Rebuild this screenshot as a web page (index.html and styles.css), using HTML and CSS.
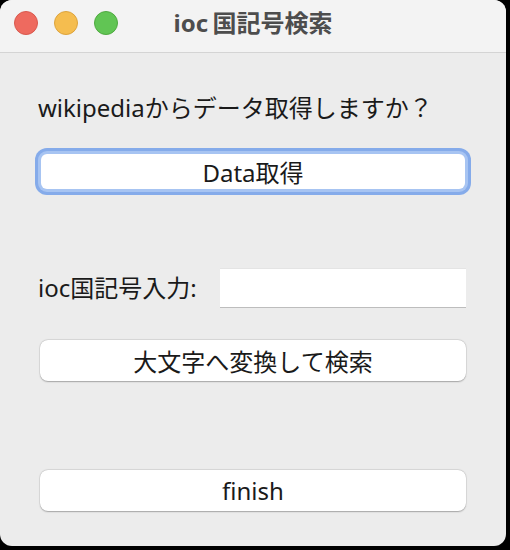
FILE: index.html
```html
<!DOCTYPE html>
<html lang="ja">
<head>
<meta charset="utf-8">
<title>ioc国記号検索</title>
<link rel="stylesheet" href="styles.css">
</head>
<body>
<div class="window">
  <div class="titlebar">
    <div class="lights">
      <span class="light red"></span>
      <span class="light yellow"></span>
      <span class="light green"></span>
    </div>
    <div class="title">ioc 国記号検索</div>
    <div class="spacer"></div>
  </div>
  <div class="content">
    <p class="prompt">wikipediaからデータ取得しますか？</p>
    <button class="btn btn-focus">Data取得</button>
    <div class="entry-row">
      <label class="entry-label" for="code">ioc国記号入力:</label>
      <input class="entry" id="code" type="text">
    </div>
    <button class="btn btn-search">大文字へ変換して検索</button>
    <button class="btn btn-finish">finish</button>
  </div>
</div>
</body>
</html>
```

FILE: styles.css
```css
html, body {
  margin: 0;
  padding: 0;
  background: #000;
}

body {
  width: 510px;
  height: 550px;
  overflow: hidden;
  font-family: "Noto Sans", "Noto Sans CJK JP", sans-serif;
}

.window {
  width: 506px;
  height: 546px;
  background: #ececec;
  border-radius: 12px;
  overflow: hidden;
  display: flex;
  flex-direction: column;
}

.titlebar {
  box-sizing: border-box;
  height: 53px;
  padding-top: 11px;
  background: #f3f3f3;
  border-bottom: 1px solid #d4d4d4;
  display: grid;
  grid-template-columns: 1fr auto 1fr;
  align-items: start;
  flex: none;
}

.lights {
  display: flex;
  gap: 16px;
  padding-left: 14px;
}

.light {
  width: 24px;
  height: 24px;
  border-radius: 50%;
  box-sizing: border-box;
}

.red { background: #ee6a5f; border: 1px solid #d8594e; }
.yellow { background: #f5bd4f; border: 1px solid #dca33d; }
.green { background: #61c554; border: 1px solid #4fa940; }

.title {
  font-size: 24px;
  font-weight: 700;
  line-height: 24px;
  color: #4d4d4d;
  word-spacing: -2px;
}

.content {
  display: flex;
  flex-direction: column;
  align-items: stretch;
  padding: 0 40px 0 38px;
}

.prompt {
  margin: 41px 0 0 0;
  font-size: 24px;
  line-height: 28px;
  color: #1a1a1a;
}

.btn {
  font-family: inherit;
  font-size: 24px;
  color: #1a1a1a;
  background: #fff;
  border: none;
  border-radius: 8px;
  padding: 0;
  margin-left: 2px;
  box-shadow: 0 0.5px 1.5px rgba(0, 0, 0, 0.28), 0 0 0 0.5px rgba(0, 0, 0, 0.08);
}

.btn-focus {
  margin: 32px 1px 0 3px;
  height: 35px;
  border-radius: 6px;
  box-shadow: 0 0 0 3px #a7c4f2, 0 0 0 6px #85abea;
}

.entry-row {
  margin-top: 79px;
  display: flex;
  align-items: center;
  justify-content: space-between;
}

.entry-label {
  font-size: 24px;
  line-height: 28px;
  color: #1a1a1a;
}

.entry {
  width: 246px;
  height: 40px;
  box-sizing: border-box;
  border: none;
  border-top: 1px solid #e4e4e4;
  border-bottom: 1px solid #bdbdbd;
  background: #fff;
  outline: none;
}

.btn-search {
  margin-top: 32px;
  height: 41px;
}

.btn-finish {
  margin-top: 89px;
  height: 41px;
}
```
